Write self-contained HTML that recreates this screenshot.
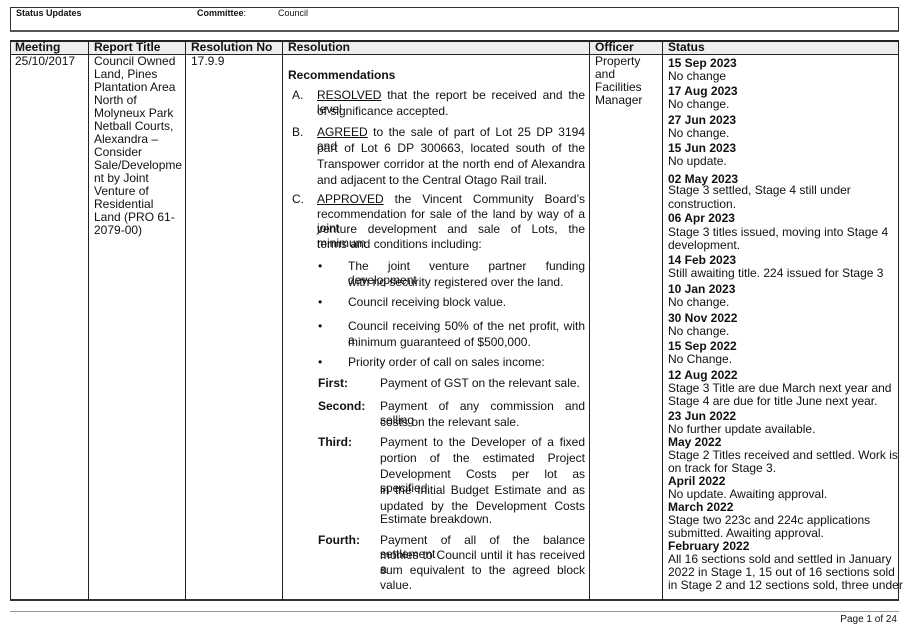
<!DOCTYPE html>
<html><head><meta charset="utf-8"><style>
*{margin:0;padding:0;box-sizing:border-box}
body{width:907px;height:626px;background:#fff;font-family:"Liberation Sans",Arial,sans-serif;color:#111;position:relative;overflow:hidden;font-size:12px}
.a{position:absolute;white-space:nowrap;line-height:14px;height:14px}
.b{font-weight:bold}
.j{text-align:justify;text-align-last:justify;white-space:normal}
.v{position:absolute;top:40px;height:561px;width:1px;background:#222}
.blk{position:absolute;line-height:13px;white-space:nowrap}
u{text-decoration:underline}
</style></head><body>
<!-- top header box -->
<div style="position:absolute;left:10px;top:7px;width:889px;height:25px;border:1px solid #333;border-bottom:2px solid #555"></div>
<div class="a b" style="left:16px;top:6px;font-size:9px">Status Updates</div>
<div class="a b" style="left:197px;top:6px;font-size:9px">Committee<span style="font-weight:normal">:</span></div>
<div class="a" style="left:278px;top:6px;font-size:9px">Council</div>
<!-- table -->
<div style="position:absolute;left:10px;top:40px;width:889px;height:15px;background:#eee;border-bottom:1px solid #222"></div>
<div style="position:absolute;left:10px;top:40px;width:889px;height:561px;border:1px solid #222;border-top:2px solid #222;border-bottom:2px solid #333"></div>
<div class="v" style="left:88px"></div>
<div class="v" style="left:185px"></div>
<div class="v" style="left:282px"></div>
<div class="v" style="left:589px"></div>
<div class="v" style="left:662px"></div>
<div class="a b" style="left:15px;top:40px">Meeting</div>
<div class="a b" style="left:94px;top:40px">Report Title</div>
<div class="a b" style="left:191px;top:40px">Resolution No</div>
<div class="a b" style="left:288px;top:40px">Resolution</div>
<div class="a b" style="left:595px;top:40px">Officer</div>
<div class="a b" style="left:668px;top:40px">Status</div>
<div class="a" style="left:15px;top:54px">25/10/2017</div>
<div class="blk" style="left:94px;top:55px">Council Owned<br>Land, Pines<br>Plantation Area<br>North of<br>Molyneux Park<br>Netball Courts,<br>Alexandra –<br>Consider<br>Sale/Developme<br>nt by Joint<br>Venture of<br>Residential<br>Land (PRO 61-<br>2079-00)</div>
<div class="a" style="left:191px;top:54px">17.9.9</div>
<div class="blk" style="left:595px;top:55px">Property<br>and<br>Facilities<br>Manager</div>
<!-- resolution -->
<div class="a b" style="left:288px;top:68px">Recommendations</div>
<div class="a" style="left:292px;top:88px">A.</div>
<div class="a j" style="left:317px;top:88px;width:268px"><u>RESOLVED</u> that the report be received and the level</div>
<div class="a" style="left:317px;top:104px">of significance accepted.</div>
<div class="a" style="left:292px;top:125px">B.</div>
<div class="a j" style="left:317px;top:125px;width:268px"><u>AGREED</u> to the sale of part of Lot 25 DP 3194 and</div>
<div class="a j" style="left:317px;top:141px;width:268px">part of Lot 6 DP 300663, located south of the</div>
<div class="a j" style="left:317px;top:157px;width:268px">Transpower corridor at the north end of Alexandra</div>
<div class="a" style="left:317px;top:173px">and adjacent to the Central Otago Rail trail.</div>
<div class="a" style="left:292px;top:192px">C.</div>
<div class="a j" style="left:317px;top:192px;width:268px"><u>APPROVED</u> the Vincent Community Board’s</div>
<div class="a j" style="left:317px;top:207px;width:268px">recommendation for sale of the land by way of a joint</div>
<div class="a j" style="left:317px;top:222px;width:268px">venture development and sale of Lots, the minimum</div>
<div class="a" style="left:317px;top:237px">terms and conditions including:</div>
<div class="a" style="left:318px;top:259px">•</div>
<div class="a j" style="left:348px;top:259px;width:237px">The joint venture partner funding development</div>
<div class="a" style="left:348px;top:275px">with no security registered over the land.</div>
<div class="a" style="left:318px;top:295px">•</div>
<div class="a" style="left:348px;top:295px">Council receiving block value.</div>
<div class="a" style="left:318px;top:319px">•</div>
<div class="a j" style="left:348px;top:319px;width:237px">Council receiving 50% of the net profit, with a</div>
<div class="a" style="left:348px;top:335px">minimum guaranteed of $500,000.</div>
<div class="a" style="left:318px;top:355px">•</div>
<div class="a" style="left:348px;top:355px">Priority order of call on sales income:</div>
<div class="a b" style="left:318px;top:376px">First:</div>
<div class="a" style="left:380px;top:376px">Payment of GST on the relevant sale.</div>
<div class="a b" style="left:318px;top:399px">Second:</div>
<div class="a j" style="left:380px;top:399px;width:205px">Payment of any commission and selling</div>
<div class="a" style="left:380px;top:415px">costs on the relevant sale.</div>
<div class="a b" style="left:318px;top:435px">Third:</div>
<div class="a j" style="left:380px;top:435px;width:205px">Payment to the Developer of a fixed</div>
<div class="a j" style="left:380px;top:451px;width:205px">portion of the estimated Project</div>
<div class="a j" style="left:380px;top:467px;width:205px">Development Costs per lot as specified</div>
<div class="a j" style="left:380px;top:483px;width:205px">in the Initial Budget Estimate and as</div>
<div class="a j" style="left:380px;top:499px;width:205px">updated by the Development Costs</div>
<div class="a" style="left:380px;top:512px">Estimate breakdown.</div>
<div class="a b" style="left:318px;top:533px">Fourth:</div>
<div class="a j" style="left:380px;top:533px;width:205px">Payment of all of the balance settlement</div>
<div class="a j" style="left:380px;top:548px;width:205px">monies to Council until it has received a</div>
<div class="a j" style="left:380px;top:563px;width:205px">sum equivalent to the agreed block</div>
<div class="a" style="left:380px;top:578px">value.</div>
<!-- status -->
<div class="a b" style="left:668px;top:56px">15 Sep 2023</div>
<div class="a" style="left:668px;top:69px">No change</div>
<div class="a b" style="left:668px;top:84px">17 Aug 2023</div>
<div class="a" style="left:668px;top:97px">No change.</div>
<div class="a b" style="left:668px;top:113px">27 Jun 2023</div>
<div class="a" style="left:668px;top:126px">No change.</div>
<div class="a b" style="left:668px;top:141px">15 Jun 2023</div>
<div class="a" style="left:668px;top:154px">No update.</div>
<div class="a b" style="left:668px;top:172px">02 May 2023</div>
<div class="a" style="left:668px;top:183px">Stage 3 settled, Stage 4 still under</div>
<div class="a" style="left:668px;top:197px">construction.</div>
<div class="a b" style="left:668px;top:211px">06 Apr 2023</div>
<div class="a" style="left:668px;top:225px">Stage 3 titles issued, moving into Stage 4</div>
<div class="a" style="left:668px;top:238px">development.</div>
<div class="a b" style="left:668px;top:253px">14 Feb 2023</div>
<div class="a" style="left:668px;top:266px">Still awaiting title. 224 issued for Stage 3</div>
<div class="a b" style="left:668px;top:282px">10 Jan 2023</div>
<div class="a" style="left:668px;top:295px">No change.</div>
<div class="a b" style="left:668px;top:311px">30 Nov 2022</div>
<div class="a" style="left:668px;top:324px">No change.</div>
<div class="a b" style="left:668px;top:339px">15 Sep 2022</div>
<div class="a" style="left:668px;top:352px">No Change.</div>
<div class="a b" style="left:668px;top:368px">12 Aug 2022</div>
<div class="a" style="left:668px;top:381px">Stage 3 Title are due March next year and</div>
<div class="a" style="left:668px;top:394px">Stage 4 are due for title June next year.</div>
<div class="a b" style="left:668px;top:409px">23 Jun 2022</div>
<div class="a" style="left:668px;top:422px">No further update available.</div>
<div class="a b" style="left:668px;top:435px">May 2022</div>
<div class="a" style="left:668px;top:448px">Stage 2 Titles received and settled. Work is</div>
<div class="a" style="left:668px;top:461px">on track for Stage 3.</div>
<div class="a b" style="left:668px;top:474px">April 2022</div>
<div class="a" style="left:668px;top:487px">No update. Awaiting approval.</div>
<div class="a b" style="left:668px;top:500px">March 2022</div>
<div class="a" style="left:668px;top:513px">Stage two 223c and 224c applications</div>
<div class="a" style="left:668px;top:526px">submitted. Awaiting approval.</div>
<div class="a b" style="left:668px;top:539px">February 2022</div>
<div class="a" style="left:668px;top:552px">All 16 sections sold and settled in January</div>
<div class="a" style="left:668px;top:565px">2022 in Stage 1, 15 out of 16 sections sold</div>
<div class="a" style="left:668px;top:578px">in Stage 2 and 12 sections sold, three under</div>
<!-- footer -->
<div style="position:absolute;left:10px;top:611px;width:889px;height:1px;background:#999"></div>
<div class="a" style="right:10px;top:613px;font-size:10px">Page 1 of 24</div>
</body></html>
